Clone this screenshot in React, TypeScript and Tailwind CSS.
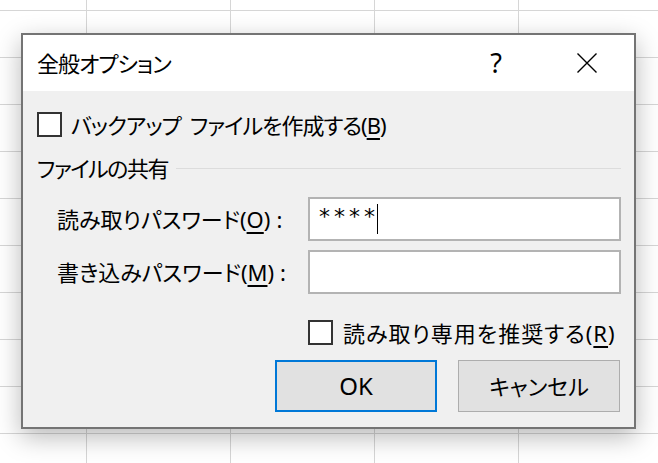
import React from "react";

function CheckBox() {
  return <div className="w-[25px] h-[25px] shrink-0 border-2 border-[#333333] bg-white" />;
}

export default function App() {
  return (
    <div className="w-[658px] h-[463px] overflow-hidden bg-white bg-[linear-gradient(to_right,#d6d6d6_1px,transparent_1px),linear-gradient(to_bottom,#d6d6d6_1px,transparent_1px)] bg-[size:144px_47px] bg-[position:86px_10px] pt-[33px] pl-[21px] font-['Noto_Sans','Noto_Sans_CJK_JP',sans-serif] [font-feature-settings:'palt'] text-black text-[22px]">
      <div className="w-[615px] h-[396px] border-2 border-[#747474] flex flex-col shadow-[0_8px_24px_rgba(0,0,0,0.28)]">
        {/* title bar */}
        <div className="h-[56px] bg-white flex items-center pl-[14px] pr-[37px]">
          <div className="flex-1 leading-none tracking-[-1px]">全般オプション</div>
          <div className="text-[27px] leading-none mt-[-2px]">?</div>
          <svg className="ml-[75px]" width="20" height="20" viewBox="0 0 20 20">
            <path d="M0.5 0.5 L19.5 19.5 M19.5 0.5 L0.5 19.5" stroke="#000" strokeWidth="1.4" fill="none" />
          </svg>
        </div>
        {/* body */}
        <div className="flex-1 bg-[#f0f0f0] pl-[14px] pr-[13px] pt-[21px] flex flex-col">
          <div className="h-[25px] flex items-center gap-[9px]">
            <CheckBox />
            <span className="leading-none tracking-[-1px]">
              バックアップ<span className="ml-[9px]">ファイルを作成する(</span>
              <span className="underline underline-offset-[4px]">B</span>)
            </span>
          </div>
          <div className="h-[26px] mt-[18px] flex items-center gap-[8px]">
            <span className="leading-none tracking-[-1.5px]">ファイルの共有</span>
            <div className="flex-1 h-px bg-[#dcdcdc]" />
          </div>
          <div className="mt-[16px] flex items-center">
            <div className="w-[271px] pl-[20px] leading-none">
              読み取りパスワード(<span className="underline underline-offset-[4px]">O</span>)<span className="ml-[6px]">:</span>
            </div>
            <div className="flex-1 h-[44px] border-2 border-[#b3b3b3] bg-white flex items-start pl-[9px] pt-[4px]">
              <span className="font-['DejaVu_Sans',sans-serif] text-[22px] leading-[28px] tracking-[4px]">****</span>
              <div className="w-px h-[30px] bg-black ml-[-2px] mt-[1px]" />
            </div>
          </div>
          <div className="mt-[9px] flex items-center">
            <div className="w-[271px] pl-[20px] leading-none">
              書き込みパスワード(<span className="underline underline-offset-[4px]">M</span>)<span className="ml-[6px]">:</span>
            </div>
            <div className="flex-1 h-[44px] border-2 border-[#b3b3b3] bg-white" />
          </div>
          <div className="mt-[26px] h-[25px] flex items-center gap-[10px] pl-[271px]">
            <CheckBox />
            <span className="leading-none tracking-[1px]">
              読み取り専用を推奨する(<span className="underline underline-offset-[4px]">R</span>)
            </span>
          </div>
          <div className="mt-[15px] flex justify-end gap-[21px] pr-[1px]">
            <div className="w-[162px] h-[52px] bg-[#e1e1e1] border-2 border-[#0078d7] flex items-center justify-center text-[24px] leading-none">
              OK
            </div>
            <div className="w-[162px] h-[52px] bg-[#e1e1e1] border border-[#adadad] flex items-center justify-center leading-none">
              キャンセル
            </div>
          </div>
        </div>
      </div>
    </div>
  );
}
